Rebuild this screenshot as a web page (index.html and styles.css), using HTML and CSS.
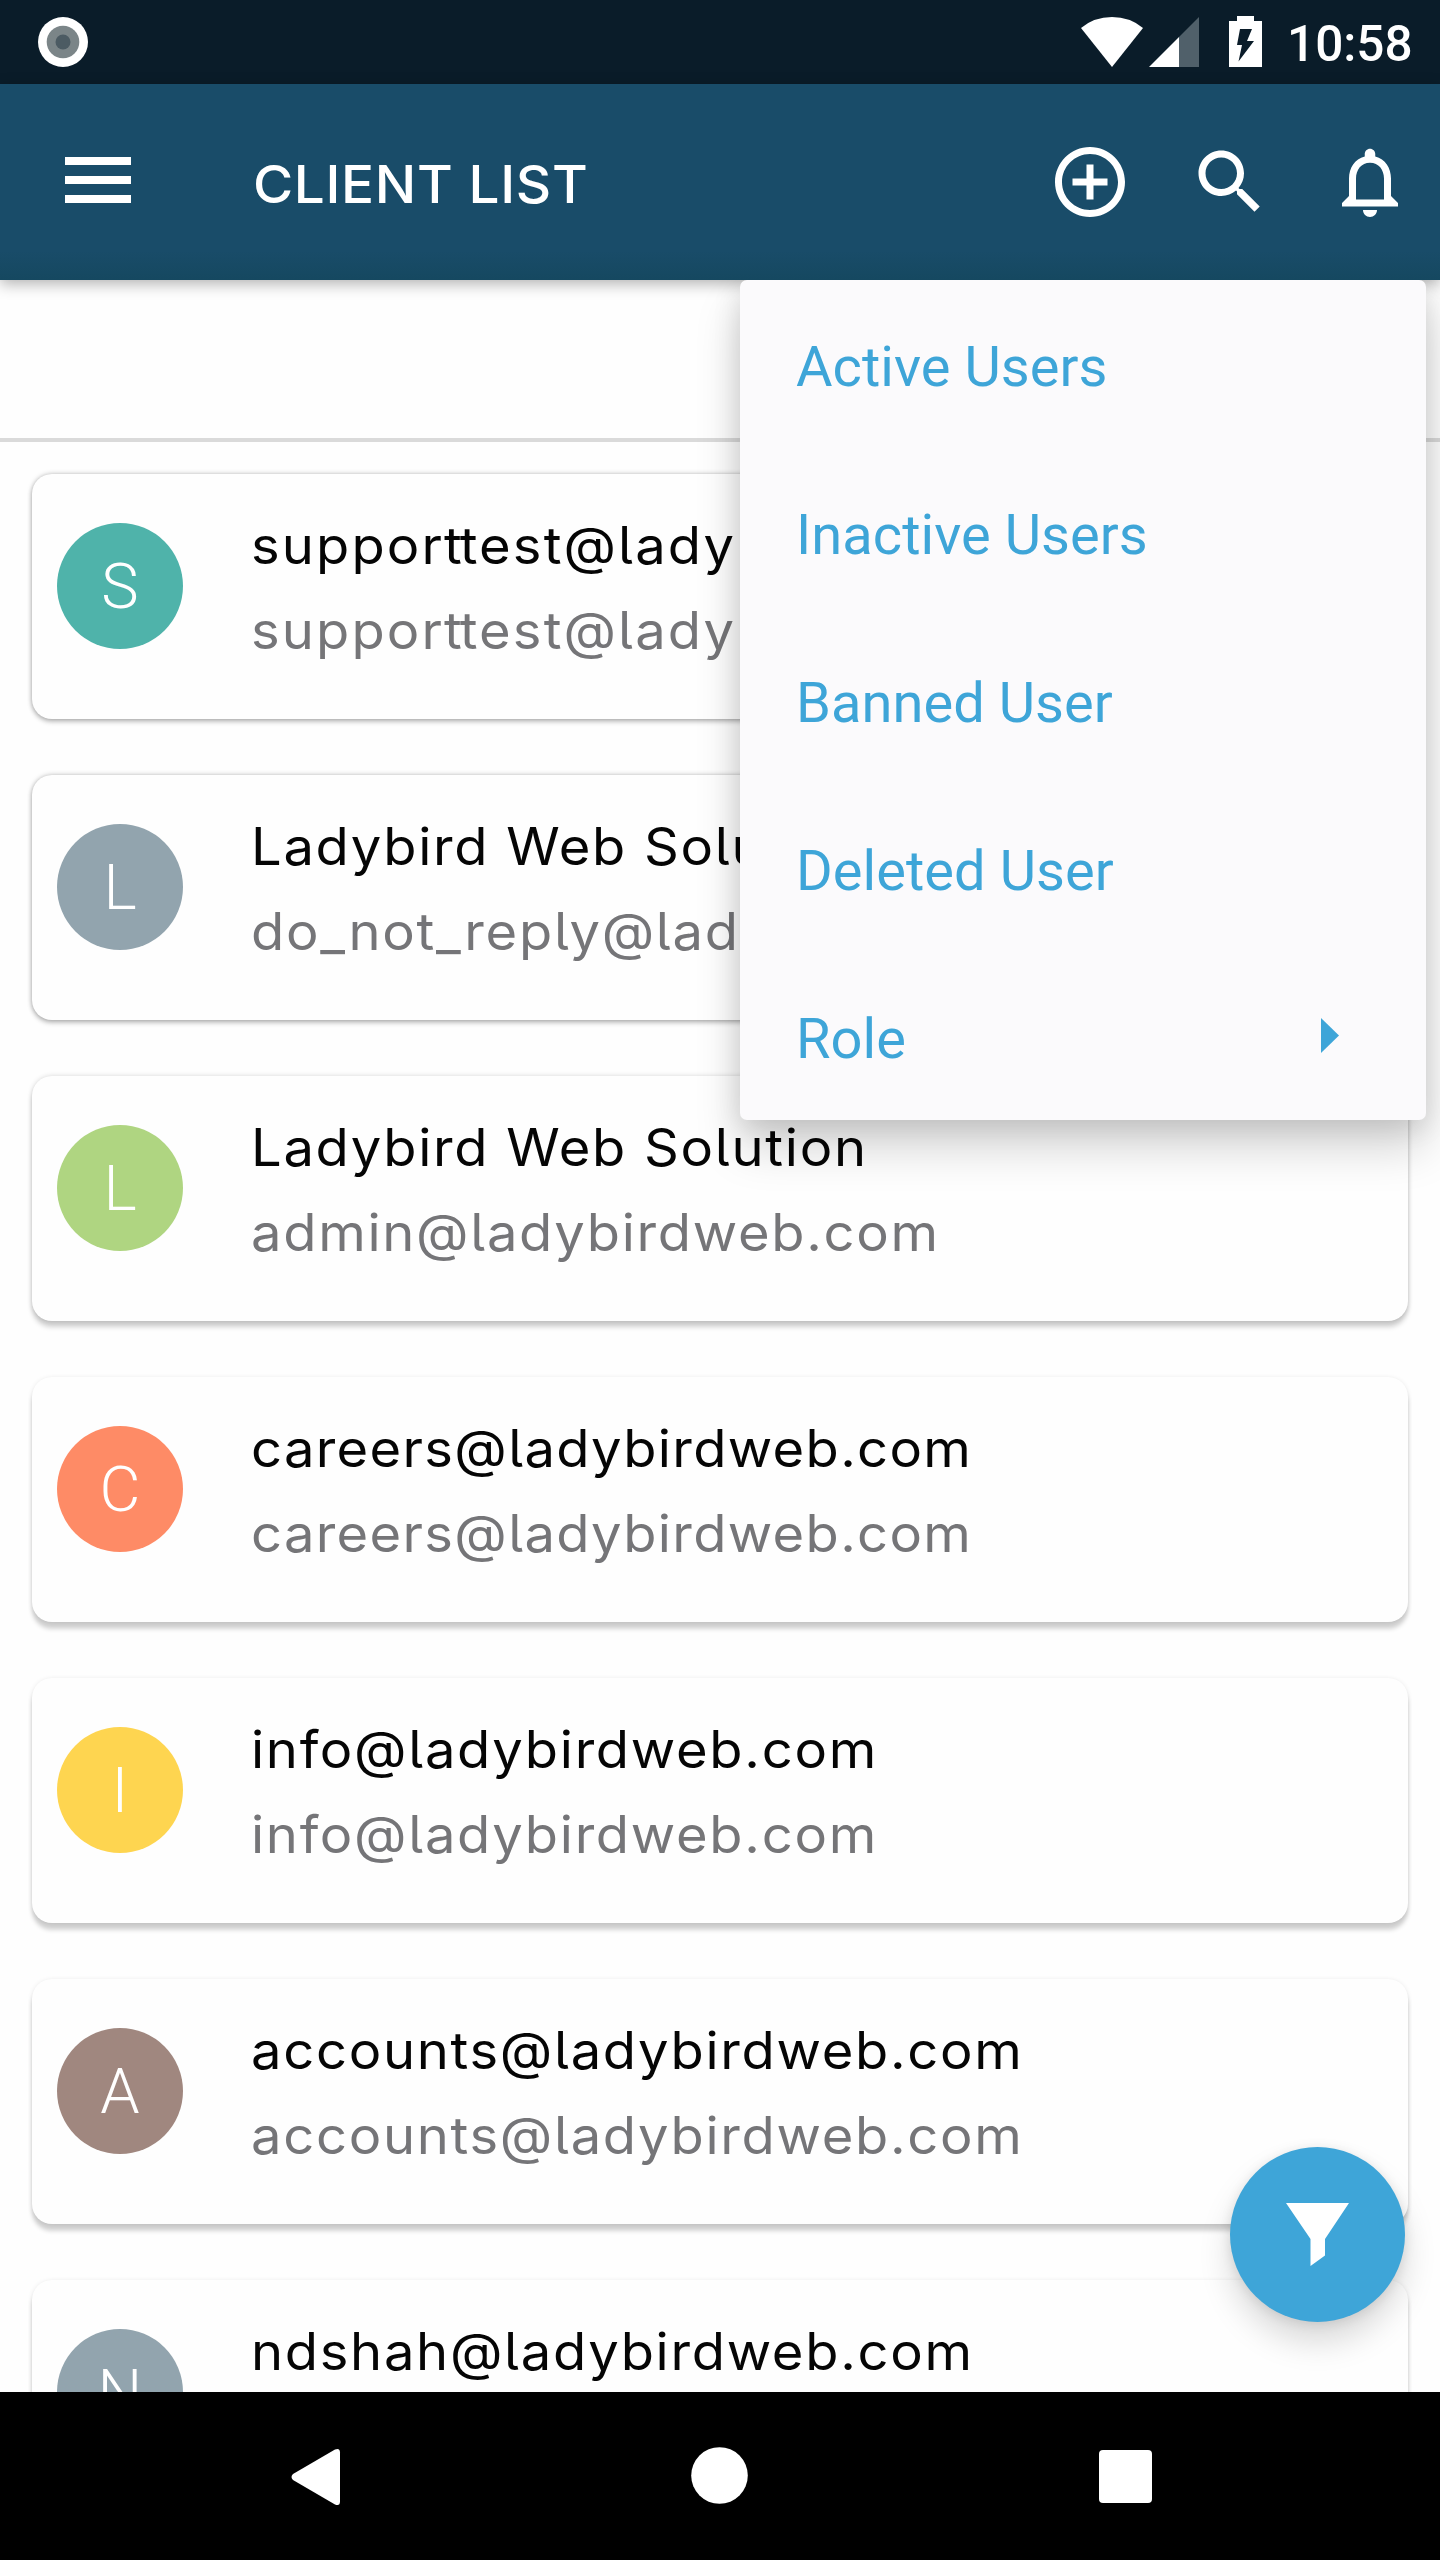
FILE: index.html
```html
<!DOCTYPE html>
<html lang="en">
<head>
<meta charset="utf-8">
<title>Client List</title>
<link rel="stylesheet" href="styles.css">
</head>
<body>
<div class="screen">
  <header class="status">
    <svg class="status-dot" width="50" height="50" viewBox="0 0 50 50"><circle cx="25" cy="25" r="25" fill="#fff"/><circle cx="25" cy="25" r="16.3" fill="#7b8588"/><circle cx="25" cy="25" r="7.5" fill="#4c5b63"/></svg>
    <div class="status-right">
      <svg class="wifi" width="62" height="50" viewBox="0 0 62 50"><path d="M31 50 0 11Q13 0 31 0t31 11z" fill="#fff"/></svg>
      <svg class="signal" width="50" height="50" viewBox="0 0 50 50"><path d="M50 0v50H30V20z" fill="#50606a"/><path d="M30 20v30H0z" fill="#fff"/></svg>
      <svg class="battery" width="33" height="51" viewBox="0 0 33 51"><path d="M8 0h17v5h8v46H0V5h8z" fill="#fff"/><path d="M11 13h12l-5 12h7L9.500 45.500 13 29H8z" fill="#0a1c29"/></svg>
      <span class="time">10:58</span>
    </div>
  </header>

  <div class="appbar">
    <div class="burger"><i></i><i></i><i></i></div>
    <h1 class="title">CLIENT LIST</h1>
    <div class="actions">
      <svg viewBox="0 0 24 24"><path d="M13 7h-2v4H7v2h4v4h2v-4h4v-2h-4V7zm-1-5C6.480 2 2 6.480 2 12s4.480 10 10 10 10-4.480 10-10S17.520 2 12 2zm0 18c-4.410 0-8-3.590-8-8s3.590-8 8-8 8 3.590 8 8-3.590 8-8 8z"/></svg>
      <svg viewBox="0 0 24 24"><path d="M15.500 14h-.79l-.28-.27C15.410 12.590 16 11.110 16 9.500 16 5.910 13.090 3 9.500 3S3 5.910 3 9.500 5.910 16 9.500 16c1.610 0 3.090-.59 4.230-1.570l.27.28v.79l5 4.990L20.490 19l-4.990-5zm-6 0C7.010 14 5 11.990 5 9.500S7.010 5 9.500 5 14 7.010 14 9.500 11.990 14 9.500 14z"/></svg>
      <svg viewBox="0 0 24 24"><path d="M12 22c1.100 0 2-.9 2-2h-4c0 1.100.9 2 2 2zm6-6v-5c0-3.070-1.630-5.640-4.500-6.320V4c0-.83-.67-1.500-1.500-1.500s-1.500.67-1.500 1.500v.68C7.640 5.360 6 7.920 6 11v5l-2 2v1h16v-1l-2-2zm-2 1H8v-6c0-2.480 1.510-4.500 4-4.500s4 2.020 4 4.500v6z"/></svg>
    </div>
  </div>

  <main class="content">
    <div class="toolbar"></div>
    <div class="list">
      <article class="card high"><div class="avatar teal">S</div><div class="lines loose"><div class="name">suppor<span class="tt">t</span>test@ladybirdweb.com</div><div class="mail">suppor<span class="tt">t</span>test@ladybirdweb.com</div></div></article>
      <article class="card high"><div class="avatar slate">L</div><div class="lines"><div class="name">Ladybird Web Solution</div><div class="mail">do_not_reply@ladybirdweb.com</div></div></article>
      <article class="card mid"><div class="avatar green">L</div><div class="lines"><div class="name">Ladybird Web Solution</div><div class="mail">admin@ladybirdweb.com</div></div></article>
      <article class="card"><div class="avatar coral">C</div><div class="lines tight"><div class="name">careers@ladybirdweb.com</div><div class="mail">careers@ladybirdweb.com</div></div></article>
      <article class="card"><div class="avatar amber">I</div><div class="lines"><div class="name">info@ladybirdweb.com</div><div class="mail">info@ladybirdweb.com</div></div></article>
      <article class="card"><div class="avatar brown">A</div><div class="lines"><div class="name">accounts@ladybirdweb.com</div><div class="mail">accounts@ladybirdweb.com</div></div></article>
      <article class="card"><div class="avatar slate">N</div><div class="lines"><div class="name">ndshah@ladybirdweb.com</div><div class="mail">ndshah@ladybirdweb.com</div></div></article>
    </div>
    <button class="fab" aria-label="Filter"><svg width="63" height="63" viewBox="0 0 63 63"><path d="M0 0h63L39 36v16.500L24.500 63V36z" fill="#fff"/></svg></button>
  </main>

  <nav class="menu">
    <div class="item">Active Users</div>
    <div class="item">Inactive Users</div>
    <div class="item">Banned User</div>
    <div class="item">Deleted User</div>
    <div class="item">Role<svg class="arrow" width="18" height="35" viewBox="0 0 18 35"><path d="M0 0l18 17.500L0 35z" fill="#3ea5d8"/></svg></div>
  </nav>

  <footer class="navbar">
    <svg class="back" width="50" height="58" viewBox="0 0 50 58"><path d="M44 1.500 2 26q-3 3 0 6l42 24.500q5 2 5-3v-49q0-5-5-3z" fill="#fff"/></svg>
    <svg class="home" width="57" height="57" viewBox="0 0 57 57"><circle cx="28.500" cy="28.500" r="28.300" fill="#fff"/></svg>
    <svg class="recent" width="53" height="53" viewBox="0 0 53 53"><rect width="53" height="53" rx="4" fill="#fff"/></svg>
  </footer>
</div>
</body>
</html>
```
FILE: styles.css
```css
* { box-sizing: border-box; }
body { margin: 0; background: #fefefe; }
.screen {
  position: relative;
  width: 1440px;
  height: 2560px;
  overflow: hidden;
  display: flex;
  flex-direction: column;
  background: #fefefe;
  font-family: Inter, "Liberation Sans", sans-serif;
}
svg { display: block; flex: none; }

.status {
  height: 84px;
  flex: none;
  display: flex;
  justify-content: space-between;
  padding: 0 29px 0 38px;
  background: #0a1c29;
}
.status-dot { margin-top: 17px; }
.status-right { display: flex; align-items: flex-start; padding-top: 17px; }
.signal { margin-left: 6px; }
.battery { margin-left: 30px; margin-top: -1px; }
.time {
  margin: -17px 0 0 25px;
  width: 124px;
  font: 500 49.5px/89px Roboto, sans-serif;
  color: #fff;
  white-space: nowrap;
}

.appbar {
  height: 196px;
  flex: none;
  display: flex;
  padding-left: 65px;
  background: linear-gradient(#194c69 85%, #154860);
  box-shadow: 0 4px 14px rgba(0, 0, 0, .3);
  z-index: 1;
}
.burger { width: 66px; margin-top: 73px; display: flex; flex-direction: column; gap: 11px; }
.burger i { height: 8px; background: #fff; }
.title {
  margin: 0 0 0 122px;
  flex: 1;
  font-weight: 500;
  font-size: 52.5px;
  line-height: 200px;
  letter-spacing: .6px;
  color: #fff;
  white-space: nowrap;
  transform: scaleX(1.045);
  transform-origin: 0 50%;
}
.actions { display: flex; gap: 56px; padding: 56px 28px 0 0; }
.actions svg { width: 84px; height: 84px; fill: #fff; }

.content { position: relative; flex: 1; min-height: 0; overflow: hidden; }
.toolbar { height: 162px; border-bottom: 4px solid #dadada; }
.list { display: flex; flex-direction: column; gap: 55px; padding: 32px 32px 0; }
.card {
  height: 245px;
  margin-bottom: 1px;
  flex: none;
  display: flex;
  padding: 0 25px;
  border-radius: 20px;
  background: #fefefe;
  box-shadow: 0 7px 4px rgba(0, 0, 0, .17), 0 1px 5px rgba(0, 0, 0, .1);
}
.card.mid { box-shadow: 0 6px 5px rgba(0, 0, 0, .18), 0 0 5px rgba(0, 0, 0, .16); }
.card.high { box-shadow: 0 3px 5px rgba(0, 0, 0, .2), 0 0 5px rgba(0, 0, 0, .26); }
.avatar {
  width: 126px;
  height: 126px;
  margin-top: 49px;
  flex: none;
  border-radius: 50%;
  text-align: center;
  font: 300 63px/128px Roboto, sans-serif;
  color: #fff;
}
.teal { background: #4fb3aa; }
.slate { background: #92a4ae; }
.green { background: #afd581; }
.coral { background: #fe8b66; }
.amber { background: #fed550; }
.brown { background: #a0877f; }
.lines {
  margin: 29px 0 0 68px;
  font-size: 51.5px;
  line-height: 85px;
  letter-spacing: 1.6px;
  font-feature-settings: "cv05" 1, "calt" 0;
  white-space: nowrap;
  transform: scaleX(1.055);
  transform-origin: 0 0;
}
.lines.tight { letter-spacing: 1.25px; }
.lines.loose { letter-spacing: 2px; }
.tt { letter-spacing: -2px; }
.name { color: #050505; }
.mail { color: #757578; }

.menu {
  position: absolute;
  left: 740px;
  top: 280px;
  z-index: 2;
  width: 686px;
  height: 840px;
  padding: 0 87px 0 56px;
  border-radius: 7px;
  background: #fbfafc;
  box-shadow: 0 28px 45px rgba(0, 0, 0, .17), 0 5px 28px rgba(0, 0, 0, .12);
  clip-path: inset(0 -100px -120px -100px);
}
.item {
  height: 168px;
  display: flex;
  align-items: center;
  justify-content: space-between;
  padding-top: 5px;
  font: 400 56px/66px Roboto, sans-serif;
  letter-spacing: .05px;
  color: #3ea5d8;
}
.arrow { margin-bottom: 6px; }

.fab {
  position: absolute;
  left: 1230px;
  top: 1867px;
  width: 175px;
  height: 175px;
  padding: 0;
  display: flex;
  align-items: center;
  justify-content: center;
  border: 0;
  border-radius: 50%;
  background: #3ea5d8;
  box-shadow: 0 20px 32px rgba(0, 0, 0, .15), 0 2px 12px rgba(0, 0, 0, .1);
}

.navbar { height: 168px; flex: none; display: flex; padding: 55px 0 0 291px; background: #000; }
.back { margin-top: 1px; }
.home { margin-left: 350px; }
.recent { margin: 3px 0 0 351px; }
```
